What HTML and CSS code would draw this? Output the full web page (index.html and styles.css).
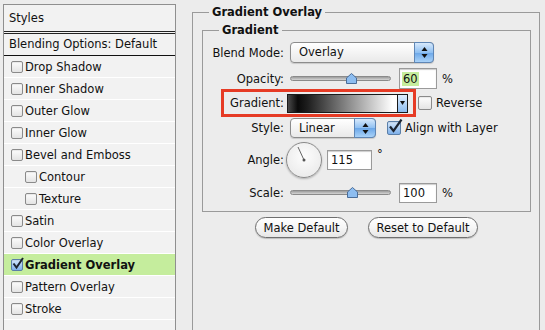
FILE: index.html
```html
<!DOCTYPE html>
<html lang="en">
<head>
    <meta charset="UTF-8">
    <title>Layer Style - Gradient Overlay</title>
    <link rel="stylesheet" href="styles.css">
</head>
<body>
    <div class="dialog">
        <div class="styles-list">
            <div class="list-head">Styles</div>
            <div class="list-blend">Blending Options: Default</div>
            <div class="list-item"><span class="check"></span>Drop Shadow</div>
            <div class="list-item"><span class="check"></span>Inner Shadow</div>
            <div class="list-item"><span class="check"></span>Outer Glow</div>
            <div class="list-item"><span class="check"></span>Inner Glow</div>
            <div class="list-item"><span class="check"></span>Bevel and Emboss</div>
            <div class="list-item sub"><span class="check"></span>Contour</div>
            <div class="list-item sub"><span class="check"></span>Texture</div>
            <div class="list-item"><span class="check"></span>Satin</div>
            <div class="list-item"><span class="check"></span>Color Overlay</div>
            <div class="list-item active">
                <span class="check checked">
                    <svg width="14" height="14" viewBox="0 0 14 14"><path d="M2.5 6.5 L5.5 10.5 L12 1" fill="none" stroke="#1c2430" stroke-width="2"/></svg>
                </span>Gradient Overlay
            </div>
            <div class="list-item"><span class="check"></span>Pattern Overlay</div>
            <div class="list-item"><span class="check"></span>Stroke</div>
        </div>

        <div class="settings">
            <fieldset class="group outer">
                <legend>Gradient Overlay</legend>
                <fieldset class="group inner">
                    <legend>Gradient</legend>

                    <div class="row row-blend">
                        <span class="label">Blend Mode:</span>
                        <div class="popup popup-wide">
                            <span class="popup-text">Overlay</span>
                            <span class="stepper">
                                <svg width="7" height="11" viewBox="0 0 7 11"><path d="M3.5 0 L6.5 4 H0.5 Z M3.5 11 L6.5 7 H0.5 Z" fill="#111"/></svg>
                            </span>
                        </div>
                    </div>

                    <div class="row row-opacity">
                        <span class="label">Opacity:</span>
                        <div class="slider">
                            <div class="track"></div>
                            <svg class="thumb" style="left: 56px" width="11" height="11" viewBox="0 0 11 11"><path d="M5.5 0.5 L10.5 5 V10.5 H0.5 V5 Z" fill="#8dbdf0" stroke="#4a6d99"/></svg>
                        </div>
                        <div class="field"><span class="selected">60</span></div>
                        <span class="unit">%</span>
                    </div>

                    <div class="row row-gradient">
                        <span class="label">Gradient:</span>
                        <div class="gradient-pick">
                            <span class="swatch"></span>
                            <span class="gp-arrow">
                                <svg width="5" height="4" viewBox="0 0 5 4"><path d="M0 0 H5 L2.5 4 Z" fill="#111"/></svg>
                            </span>
                        </div>
                        <span class="check big"></span>
                        <span class="check-text">Reverse</span>
                        <div class="callout"></div>
                    </div>

                    <div class="row row-style">
                        <span class="label">Style:</span>
                        <div class="popup popup-small">
                            <span class="popup-text">Linear</span>
                            <span class="stepper">
                                <svg width="7" height="11" viewBox="0 0 7 11"><path d="M3.5 0 L6.5 4 H0.5 Z M3.5 11 L6.5 7 H0.5 Z" fill="#111"/></svg>
                            </span>
                        </div>
                        <span class="check big checked align">
                            <svg width="16" height="16" viewBox="0 0 16 16"><path d="M3 7.5 L6.5 12 L14.5 0.5" fill="none" stroke="#1c2430" stroke-width="2.2"/></svg>
                        </span>
                        <span class="check-text">Align with Layer</span>
                    </div>

                    <div class="row row-angle">
                        <span class="label">Angle:</span>
                        <div class="dial">
                            <svg width="36" height="36" viewBox="0 0 36 36"><line x1="18" y1="18" x2="12" y2="5" stroke="#666" stroke-width="1"/><circle cx="18" cy="18" r="1.5" fill="#555"/></svg>
                        </div>
                        <div class="field field-angle">115</div>
                        <span class="degree">°</span>
                    </div>

                    <div class="row row-scale">
                        <span class="label">Scale:</span>
                        <div class="slider">
                            <div class="track"></div>
                            <svg class="thumb" style="left: 57px" width="11" height="11" viewBox="0 0 11 11"><path d="M5.5 0.5 L10.5 5 V10.5 H0.5 V5 Z" fill="#8dbdf0" stroke="#4a6d99"/></svg>
                        </div>
                        <div class="field">100</div>
                        <span class="unit">%</span>
                    </div>
                </fieldset>

                <div class="buttons">
                    <button class="btn-make">Make Default</button>
                    <button class="btn-reset">Reset to Default</button>
                </div>
            </fieldset>
        </div>
    </div>
</body>
</html>
```

FILE: styles.css
```css
* {
    margin: 0;
    padding: 0;
    box-sizing: border-box;
}

body {
    height: 330px;
    overflow: hidden;
    background-color: #ececec;
    font-family: "DejaVu Sans", "Lucida Grande", sans-serif;
    font-size: 11.5px;
    color: #111;
}

.dialog {
    display: flex;
    align-items: flex-start;
    padding: 4px 0 0 3px;
}

/* left list of styles */
.styles-list {
    width: 173px;
    height: 340px;
    border: 1px solid #8f8f8f;
    border-bottom: none;
    background-color: #f2f2f2;
}

.list-head {
    height: 29px;
    line-height: 26px;
    padding-left: 5px;
    border-bottom: 3px double #222;
}

.list-blend {
    height: 22px;
    line-height: 21px;
    padding-left: 5px;
    border-bottom: 1px solid #111;
}

.list-item {
    display: flex;
    align-items: center;
    height: 22px;
    padding-left: 7px;
    border-bottom: 1px solid #fff;
}

.list-item.sub {
    padding-left: 21px;
}

.list-item.active {
    background-color: #c5ed9d;
    font-weight: bold;
}

.check {
    position: relative;
    width: 12px;
    height: 12px;
    margin-right: 2px;
    border: 1px solid #8a8a8a;
    border-radius: 2px;
    background: linear-gradient(#fdfdfd, #e4e4e4);
    box-shadow: inset 0 1px 1px rgba(0, 0, 0, 0.08);
    flex-shrink: 0;
}

.check.checked {
    background: linear-gradient(#d4e7fb, #7fb1ea);
    border-color: #5b7fa8;
}

.check svg {
    position: absolute;
    left: -1px;
    top: -3px;
}

.check.big {
    width: 14px;
    height: 14px;
    margin-left: 10px;
    margin-right: 4px;
}

.check.align {
    margin-left: 11px;
}

/* right settings */
.settings {
    margin-left: 16px;
}

.group {
    border: 1px solid #9a9a9a;
}

.group legend {
    font-weight: bold;
    line-height: 14px;
    padding: 0 3px;
}

.outer {
    width: 348px;
    height: 340px;
    margin-top: 1px;
    padding: 4px 8px 0 9px;
}

.outer > legend {
    margin-left: 7px;
}

.inner {
    width: 329px;
    padding: 5px 0 8px 0;
}

.inner > legend {
    margin-left: 16px;
}

.row {
    position: relative;
    display: flex;
    align-items: center;
}

.label {
    width: 81px;
    margin-right: 6px;
    text-align: right;
}

.row-blend { height: 21px; }
.row-opacity { height: 21px; margin-top: 5px; }
.row-gradient { height: 28px; }
.row-style { height: 20px; margin-top: 1px; }
.row-angle { height: 36px; margin-top: 4px; }
.row-scale { height: 20px; margin-top: 5px; }

.row-gradient .label { margin-right: 3px; }
.row-angle .label { margin-right: 2px; }

/* pop-up menus */
.popup {
    display: flex;
    align-items: stretch;
    height: 21px;
    border: 1px solid #8c8c8c;
    border-radius: 4px;
    background: linear-gradient(#fff, #f4f4f4 50%, #e9e9e9);
    box-shadow: 0 1px 1px rgba(0, 0, 0, 0.15);
}

.popup-wide { width: 144px; }
.popup-small { width: 86px; height: 20px; }

.popup-text {
    flex: 1;
    padding-left: 8px;
    line-height: 19px;
}

.stepper {
    display: flex;
    align-items: center;
    justify-content: center;
    width: 20px;
    margin: -1px -1px -1px 0;
    border: 1px solid #5f86b5;
    border-radius: 0 4px 4px 0;
    background: linear-gradient(#d7e9fc, #8fc0f2 50%, #6aa6e8 51%, #a9d2f8);
}

.popup-small .stepper { width: 22px; }

/* sliders */
.slider {
    position: relative;
    width: 101px;
    height: 14px;
}

.track {
    position: absolute;
    left: 0;
    right: 0;
    top: 4px;
    height: 5px;
    border: 1px solid #8a8a8a;
    border-radius: 3px;
    background: linear-gradient(#9c9c9c, #d4d4d4);
}

.thumb {
    position: absolute;
    top: 1px;
}

.field {
    display: flex;
    align-items: center;
    width: 38px;
    height: 21px;
    margin-left: 8px;
    padding-left: 3px;
    border: 1px solid #9a9a9a;
    background-color: #fff;
    box-shadow: inset 0 1px 1px rgba(0, 0, 0, 0.2);
}

.row-scale .field { height: 20px; }

.selected {
    background-color: #c5ed9d;
    padding: 0 1px;
    margin-left: -1px;
}

.unit {
    margin-left: 5px;
}

/* gradient picker */
.gradient-pick {
    display: flex;
    width: 121px;
    height: 19px;
    border: 1px solid #1a1a1a;
}

.swatch {
    flex: 1;
    background: linear-gradient(to right, #4a4a4a, #0a0a0a 9%, #1e1e1e 18%, #8a8a8a 55%, #fff 96%);
}

.gp-arrow {
    display: flex;
    align-items: center;
    justify-content: center;
    width: 10px;
    border-left: 1px solid #1a1a1a;
    background: linear-gradient(#e0eefd, #8dbdf0);
}

.callout {
    position: absolute;
    left: 18px;
    top: 0;
    width: 195px;
    height: 28px;
    border: 3px solid #e63b25;
}

/* angle dial */
.dial {
    width: 36px;
    height: 36px;
    border: 1px solid #8a8a8a;
    border-radius: 50%;
    background: radial-gradient(circle at 50% 40%, #fdfdfd, #e6e6e6);
    box-shadow: 0 1px 2px rgba(0, 0, 0, 0.25);
}

.dial svg {
    display: block;
    margin: -1px;
}

.field-angle {
    width: 45px;
    height: 20px;
    margin-left: 5px;
}

.degree {
    align-self: flex-start;
    margin-top: 5px;
    margin-left: 5px;
}

/* buttons */
.buttons {
    display: flex;
    justify-content: center;
    gap: 20px;
    margin-top: 5px;
}

button {
    height: 21px;
    border: 1px solid #6f6f6f;
    border-radius: 11px;
    background: linear-gradient(#fff, #f6f6f6 50%, #e6e6e6);
    box-shadow: 0 1px 1px rgba(0, 0, 0, 0.2);
    font-family: inherit;
    font-size: inherit;
    color: #111;
}

.btn-make { width: 93px; }
.btn-reset { width: 110px; }
```
